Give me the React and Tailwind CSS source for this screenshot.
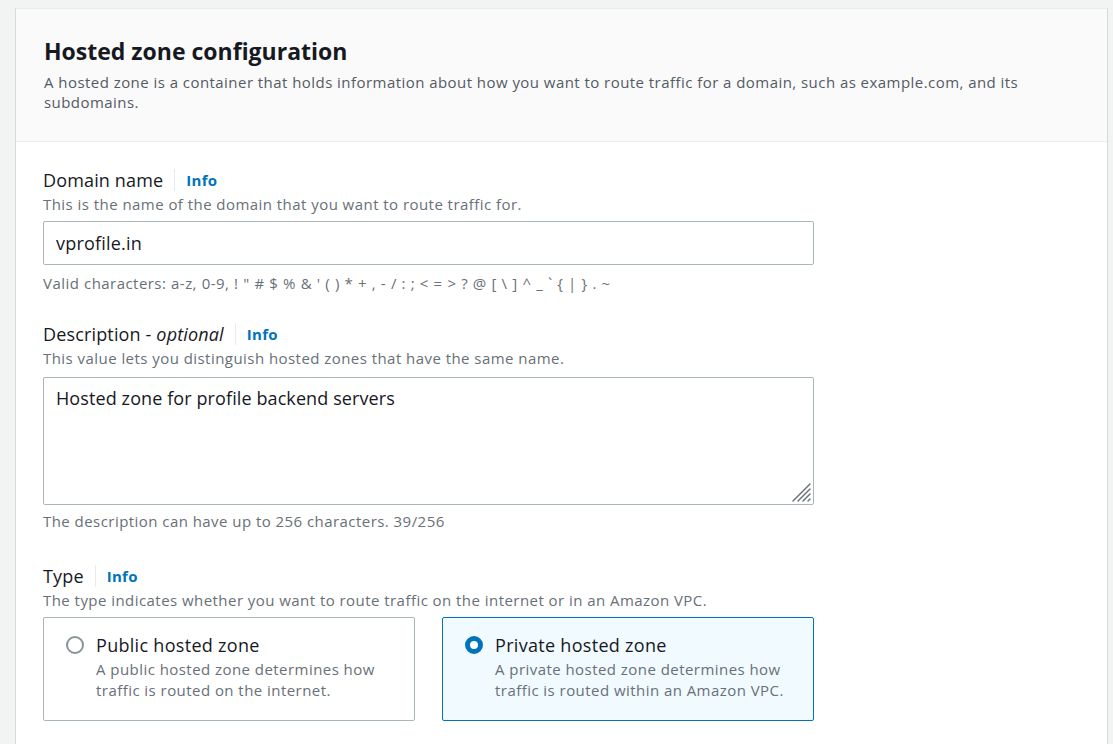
import { useState } from 'react';

const font = { fontFamily: '"Open Sans", "Noto Sans", Arial, sans-serif' };

function Label({ children }) {
  return (
    <div className="flex items-center h-[22px]">
      <span className="text-[18px] leading-[22px] tracking-[0.15px] text-[#16191f]">{children}</span>
      <span className="ml-[11px] h-[22px] border-l border-[#e9ebed]" />
      <a className="ml-[11px] text-[15px] font-bold tracking-[0.3px] text-[#0073bb] leading-[22px]">Info</a>
    </div>
  );
}

function Hint({ className = '', children }) {
  return (
    <p className={`text-[15px] leading-[20px] tracking-[0.45px] text-[#687078] ${className}`}>{children}</p>
  );
}

function RadioCard({ checked, title, desc, onClick }) {
  return (
    <div
      onClick={onClick}
      className={`w-[372px] h-[104px] rounded-[2px] border pl-[22px] pr-[20px] pt-[15px] cursor-pointer ${
        checked ? 'border-[#0073bb] bg-[#f1faff]' : 'border-[#aab7b8] bg-white'
      }`}
    >
      <div className="flex">
        <div className="pt-[3px] shrink-0">
          {checked ? (
            <div className="w-[18px] h-[18px] rounded-full border-[5px] border-[#0073bb] bg-white" />
          ) : (
            <div className="w-[18px] h-[18px] rounded-full border-2 border-[#879596] bg-white" />
          )}
        </div>
        <div className="ml-[12px]">
          <div className="text-[18px] leading-[24px] tracking-[0.3px] text-[#16191f]">{title}</div>
          <div className="mt-[2px] text-[15px] leading-[21px] tracking-[0.45px] text-[#687078]">{desc}</div>
        </div>
      </div>
    </div>
  );
}

export default function App() {
  const [type, setType] = useState('private');
  const [desc, setDesc] = useState('Hosted zone for profile backend servers');

  return (
    <div className="min-h-screen bg-[#f2f3f3] pt-2 pl-[15px] pr-[5px]" style={font}>
      <div className="bg-white border border-[#d5dbdb] border-t-[#eaeded] min-h-[740px]">
        <div className="bg-[#fafafa] border-b border-[#eaeded] px-[28px] pt-[27px] pb-[29px]">
          <h2 className="text-[23px] leading-[30px] font-bold text-[#16191f]">Hosted zone configuration</h2>
          <p className="mt-[6px] text-[15px] leading-[20px] tracking-[0.45px] text-[#545b64] max-w-[1000px]">
            A hosted zone is a container that holds information about how you want to route traffic for a domain, such as example.com, and its subdomains.
          </p>
        </div>

        <div className="px-[27px] pt-[27px] pb-8">
          <Label>Domain name</Label>
          <Hint className="mt-[3px]">This is the name of the domain that you want to route traffic for.</Hint>
          <input
            defaultValue="vprofile.in"
            className="mt-[7px] block w-[771px] h-[44px] border border-[#aab7b8] rounded-[2px] px-[12px] text-[18px] tracking-[0.2px] text-[#16191f] outline-none"
            style={font}
          />
          <Hint className="mt-[8px] [word-spacing:0.4px]">
            Valid characters: a-z, 0-9, ! " # $ % &amp; ' ( ) * + , - / : ; &lt; = &gt; ? @ [ \ ] ^ _ ` {'{'} | {'}'} . ~
          </Hint>

          <div className="mt-[30px]">
            <Label>
              Description - <i>optional</i>
            </Label>
          </div>
          <Hint className="mt-[3px]">This value lets you distinguish hosted zones that have the same name.</Hint>
          <div className="relative mt-[9px] w-[771px]">
            <textarea
              value={desc}
              onChange={(e) => setDesc(e.target.value)}
              className="block w-full h-[128px] border border-[#aab7b8] rounded-[2px] px-[12px] pt-[8px] text-[18px] leading-[24px] tracking-[0.1px] text-[#16191f] outline-none resize-none"
              style={font}
            />
            <svg className="absolute right-[2px] bottom-[2px]" width="22" height="22" viewBox="0 0 22 22">
              <g stroke="#687078" strokeWidth="1.4" strokeLinecap="round">
                <line x1="3" y1="20" x2="20" y2="3" />
                <line x1="8" y1="20" x2="20" y2="8" />
                <line x1="13" y1="20" x2="20" y2="13" />
                <line x1="18" y1="20" x2="20" y2="18" />
              </g>
            </svg>
          </div>
          <Hint className="mt-[6px]">The description can have up to 256 characters. {desc.length}/256</Hint>

          <div className="mt-[34px]">
            <Label>Type</Label>
          </div>
          <Hint className="mt-[3px]">
            The type indicates whether you want to route traffic on the internet or in an Amazon VPC.
          </Hint>
          <div className="mt-[7px] flex gap-[27px]">
            <RadioCard
              checked={type === 'public'}
              onClick={() => setType('public')}
              title="Public hosted zone"
              desc="A public hosted zone determines how traffic is routed on the internet."
            />
            <RadioCard
              checked={type === 'private'}
              onClick={() => setType('private')}
              title="Private hosted zone"
              desc="A private hosted zone determines how traffic is routed within an Amazon VPC."
            />
          </div>
        </div>
      </div>
    </div>
  );
}
